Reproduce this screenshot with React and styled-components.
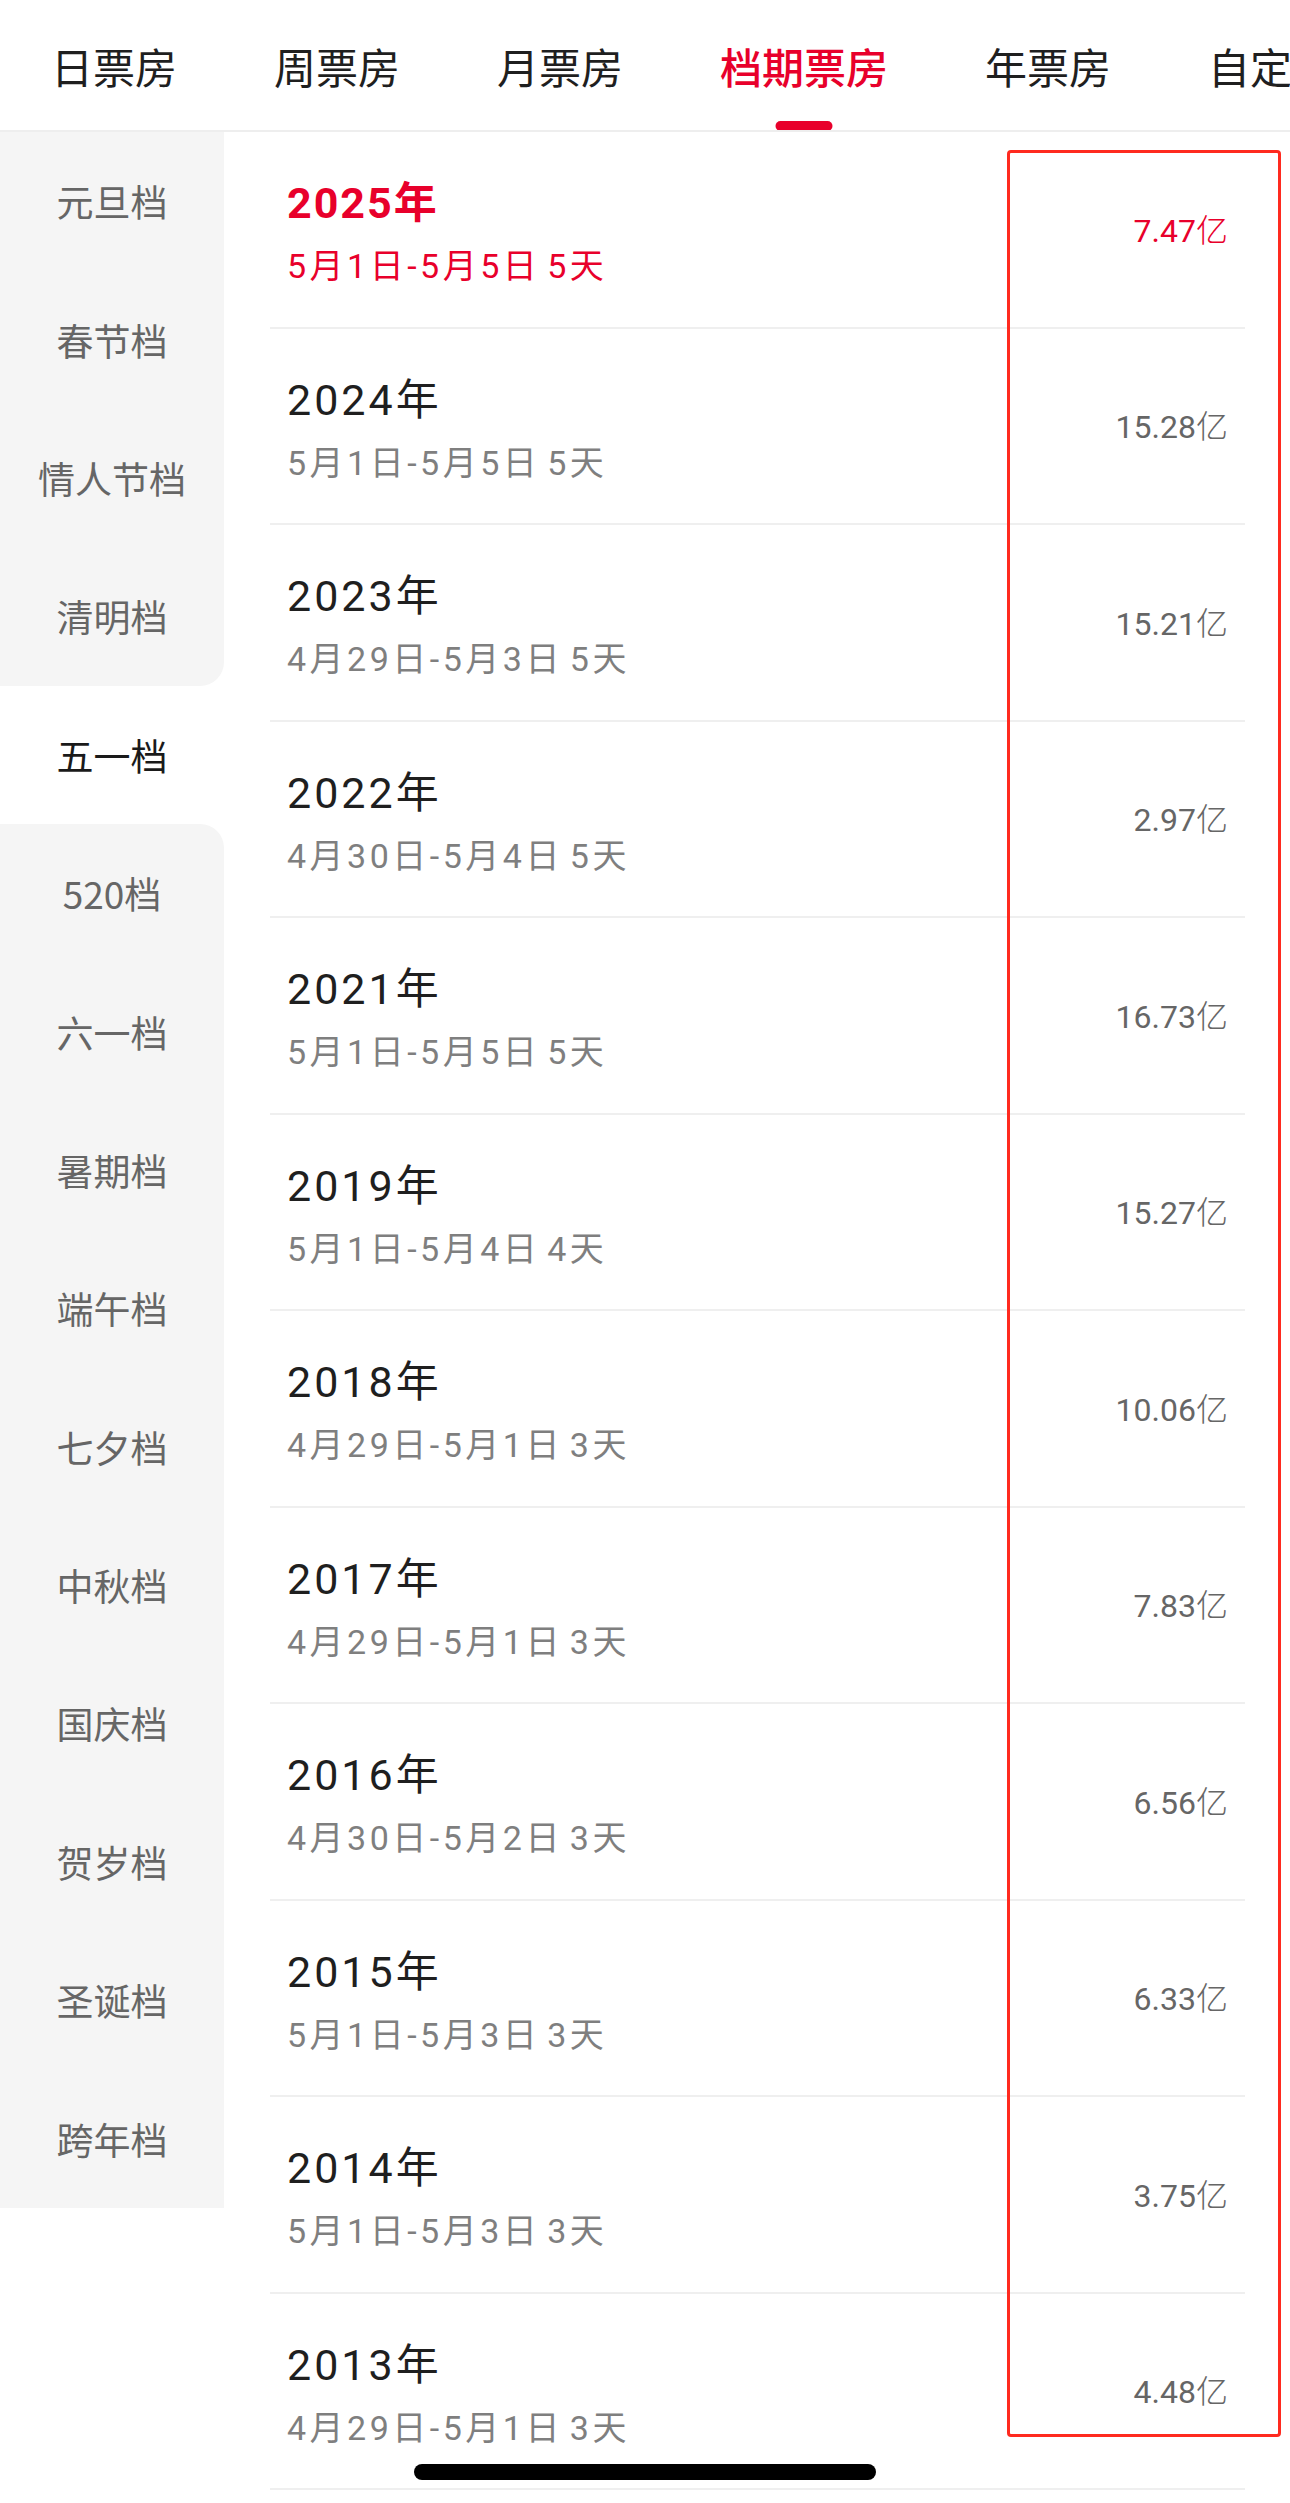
import React from "react";
import styled, { createGlobalStyle } from "styled-components";

const Global = createGlobalStyle`
  html, body { margin: 0; padding: 0; background: #fff; }
  body { font-family: Roboto, "Noto Sans CJK SC", sans-serif; -webkit-font-smoothing: antialiased; }
  * { box-sizing: border-box; }
`;

const RED = "#e8002b";

const Page = styled.div`
  position: relative;
  width: 1290px;
  height: 2503px;
  overflow: hidden;
  background: #fff;
`;

const TabBar = styled.div`
  display: flex;
  align-items: stretch;
  height: 132px;
  padding-left: 51px;
  gap: 97px;
  border-bottom: 2px solid #eeeeee;
  white-space: nowrap;
  overflow: hidden;
`;

const Tab = styled.div`
  position: relative;
  display: flex;
  align-items: center;
  height: 130px;
  font-size: 42px;
  font-family: "Noto Sans CJK SC", sans-serif;
  font-weight: ${(p) => (p.$active ? 500 : 400)};
  color: ${(p) => (p.$active ? RED : "#1f1f1f")};
  flex-shrink: 0;
`;

const Indicator = styled.span`
  position: absolute;
  left: 50%;
  bottom: -1px;
  transform: translateX(-50%);
  width: 57px;
  height: 10px;
  border-radius: 5px;
  background: ${RED};
`;

const Body = styled.div`
  display: flex;
  align-items: flex-start;
`;

const Sidebar = styled.div`
  width: 224px;
  flex-shrink: 0;
  display: flex;
  flex-direction: column;
  background: #fff;
`;

const SideItem = styled.div`
  height: 138.4px;
  display: flex;
  align-items: center;
  justify-content: center;
  font-family: "Noto Sans CJK SC", sans-serif;
  font-size: 37px;
  color: ${(p) => (p.$active ? "#1a1a1a" : "#666666")};
  background: ${(p) => (p.$active ? "#ffffff" : "#f5f5f5")};
  border-bottom-right-radius: ${(p) => (p.$before ? "24px" : "0")};
  border-top-right-radius: ${(p) => (p.$after ? "24px" : "0")};
`;

const List = styled.div`
  flex: 1;
  margin: 0 45px 0 46px;
  display: flex;
  flex-direction: column;
`;

const Row = styled.div`
  height: 196.5px;
  display: flex;
  align-items: center;
  justify-content: space-between;
  padding: 0 17px;
  border-bottom: 2px solid #efefef;
`;

const Info = styled.div`
  align-self: flex-start;
  padding-top: 43px;
  display: flex;
  flex-direction: column;
  gap: 13px;
`;

const Year = styled.div`
  font-size: 43px;
  line-height: 56px;
  letter-spacing: ${(p) => (p.$active ? "2px" : "3px")};
  font-weight: ${(p) => (p.$active ? 700 : 400)};
  color: ${(p) => (p.$active ? RED : "#1f1f1f")};
`;

const Range = styled.div`
  font-size: 34px;
  line-height: 44px;
  letter-spacing: 3.5px;
  word-spacing: -5px;
  color: ${(p) => (p.$active ? RED : "#7f7f7f")};
`;

const Amount = styled.div`
  font-size: 32px;
  line-height: 44px;
  color: ${(p) => (p.$active ? RED : "#666666")};
`;

const Unit = styled.span`
  font-family: "Noto Sans CJK SC", sans-serif;
  font-weight: 300;
`;

const Highlight = styled.div`
  position: absolute;
  left: 1007px;
  top: 150px;
  width: 274px;
  height: 2287px;
  border: 3px solid #ff2a1f;
  border-radius: 4px;
  pointer-events: none;
`;

const HomeBar = styled.div`
  position: absolute;
  left: 414px;
  top: 2464px;
  width: 462px;
  height: 16px;
  border-radius: 8px;
  background: #000;
`;

const tabs = ["日票房", "周票房", "月票房", "档期票房", "年票房", "自定义"];
const seasons = [
  "元旦档", "春节档", "情人节档", "清明档", "五一档", "520档", "六一档", "暑期档",
  "端午档", "七夕档", "中秋档", "国庆档", "贺岁档", "圣诞档", "跨年档",
];
const activeSeason = 4;

const rows = [
  ["2025", "5月1日-5月5日 5天", "7.47"],
  ["2024", "5月1日-5月5日 5天", "15.28"],
  ["2023", "4月29日-5月3日 5天", "15.21"],
  ["2022", "4月30日-5月4日 5天", "2.97"],
  ["2021", "5月1日-5月5日 5天", "16.73"],
  ["2019", "5月1日-5月4日 4天", "15.27"],
  ["2018", "4月29日-5月1日 3天", "10.06"],
  ["2017", "4月29日-5月1日 3天", "7.83"],
  ["2016", "4月30日-5月2日 3天", "6.56"],
  ["2015", "5月1日-5月3日 3天", "6.33"],
  ["2014", "5月1日-5月3日 3天", "3.75"],
  ["2013", "4月29日-5月1日 3天", "4.48"],
];

export default function App() {
  return (
    <Page>
      <Global />
      <TabBar>
        {tabs.map((t) => (
          <Tab key={t} $active={t === "档期票房"}>
            {t}
            {t === "档期票房" && <Indicator />}
          </Tab>
        ))}
      </TabBar>
      <Body>
        <Sidebar>
          {seasons.map((s, i) => (
            <SideItem
              key={s}
              $active={i === activeSeason}
              $before={i === activeSeason - 1}
              $after={i === activeSeason + 1}
            >
              {s}
            </SideItem>
          ))}
        </Sidebar>
        <List>
          {rows.map(([y, r, a], i) => (
            <Row key={y}>
              <Info>
                <Year $active={i === 0}>{y}年</Year>
                <Range $active={i === 0}>{r}</Range>
              </Info>
              <Amount $active={i === 0}>
                {a}
                <Unit>亿</Unit>
              </Amount>
            </Row>
          ))}
        </List>
      </Body>
      <Highlight />
      <HomeBar />
    </Page>
  );
}
